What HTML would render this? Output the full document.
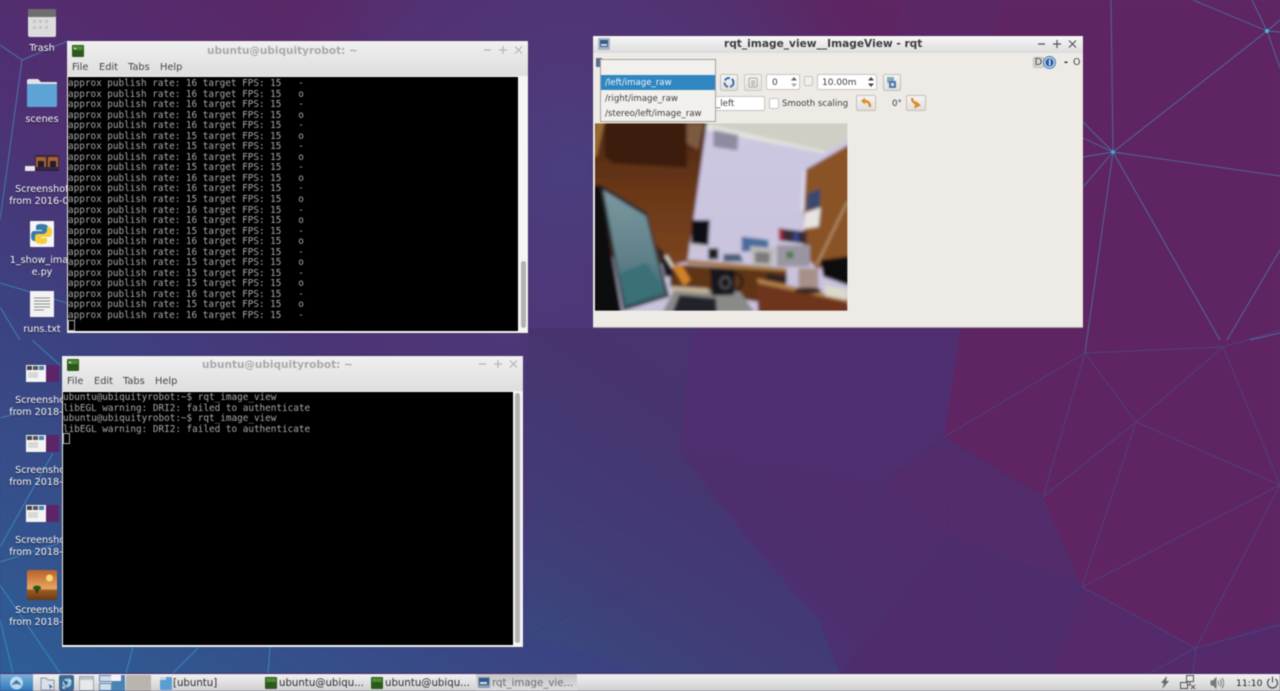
<!DOCTYPE html>
<html><head><meta charset="utf-8"><title>Desktop</title>
<style>
html,body{margin:0;padding:0;width:1280px;height:691px;overflow:hidden;background:#4a3a78}
*{box-sizing:border-box}
#root{position:relative;width:1280px;height:691px;overflow:hidden;filter:blur(.45px);font-family:"DejaVu Sans","Liberation Sans",sans-serif}
.abs,.lbl,.win,.t{position:absolute}
.lbl{width:84px;left:0;text-align:center;color:#fff;font-size:9.6px;line-height:12px;text-shadow:0 1px 1px rgba(0,0,0,.7);white-space:nowrap}
.win{background:#f2f0ed;box-shadow:0 0 1px rgba(0,0,0,.5)}
.tb{position:absolute;left:0;right:0;top:0;height:19px;background:linear-gradient(#f4f4f4,#dcdcdc)}
.ttl{position:absolute;top:3px;margin-top:1px;font-weight:bold;font-size:10.5px;line-height:13px;white-space:nowrap}
.mi{position:absolute;margin-top:1px;font-size:9.8px;line-height:12px;color:#444}
.term{position:absolute;background:#000;color:#a8a8a8;font:9.33px/10.55px "DejaVu Sans Mono",monospace;margin:0;white-space:pre;overflow:hidden}
.t{white-space:nowrap;font-size:8.6px;line-height:12px;color:#3c3c3c;margin-top:1px}
.btn{position:absolute;background:linear-gradient(#f6f5f3,#e2dfdb);border:1px solid #c4c0bb;border-radius:2px}
.inp{position:absolute;background:#fff;border:1px solid #c8c4bf;border-radius:2px}
.task{position:absolute;white-space:nowrap;font-size:10.2px;line-height:13px;color:#2f2f2f;top:677px}
</style></head><body><div id="root">

<svg class="abs" style="left:0;top:0" width="1280" height="691" viewBox="0 0 1280 691">
<defs>
<linearGradient id="bg" gradientUnits="userSpaceOnUse" x1="0" y1="691" x2="600" y2="-309">
<stop offset="0" stop-color="#2d5f97"/><stop offset=".3" stop-color="#3d4180"/><stop offset=".42" stop-color="#4d3274"/><stop offset=".65" stop-color="#5b2768"/><stop offset="1" stop-color="#5f2460"/>
</linearGradient>
<radialGradient id="mid" gradientUnits="userSpaceOnUse" cx="570" cy="170" r="310">
<stop offset="0" stop-color="#4a4080" stop-opacity=".95"/><stop offset=".7" stop-color="#4c3a7a" stop-opacity=".6"/><stop offset="1" stop-color="#4c3a7a" stop-opacity="0"/>
</radialGradient>
<linearGradient id="lg" gradientUnits="userSpaceOnUse" x1="525" y1="650" x2="700" y2="380">
<stop offset="0" stop-color="#374a80"/><stop offset=".3" stop-color="#403e78"/><stop offset=".8" stop-color="#47356f"/><stop offset="1" stop-color="#48346e"/>
</linearGradient>
<linearGradient id="rg" gradientUnits="userSpaceOnUse" x1="780" y1="660" x2="1040" y2="400">
<stop offset="0" stop-color="#4b3170"/><stop offset="1" stop-color="#562a6a"/>
</linearGradient>
</defs>
<rect width="1280" height="691" fill="url(#bg)"/>
<rect width="1280" height="691" fill="url(#mid)"/>
<polygon points="961,0 1280,0 1280,673 1196,648 1082,587 1043,497 944,437 961,328" fill="#5e2562"/>
<polygon points="1000,0 961,328 880,330 900,0" fill="#5b2a68" opacity=".6"/>
<polygon points="692,328 961,328 944,437 881,483 680,453" fill="#4f2f70"/>
<polygon points="528,328 692,328 680,453 525,413" fill="url(#lg)"/>
<polygon points="680,453 881,483 820,622 762,557" fill="url(#rg)"/>
<polygon points="881,483 944,437 1043,497 1082,587 949,537" fill="#522c6b"/>
<polygon points="881,483 949,537 840,673 820,622" fill="url(#rg)"/>
<polygon points="949,537 1082,587 1051,673 840,673" fill="#4f2d6d"/>
<polygon points="1082,587 1196,648 1280,620 1280,673 1051,673" fill="#552a6a"/>
<polygon points="525,413 680,453 762,557 531,512" fill="url(#lg)"/>
<polygon points="762,557 820,622 840,673 650,673 527,635 531,512" fill="url(#lg)"/>
<g fill="none" stroke="#2f3d70" stroke-width="1" opacity=".3">
<path d="M680,453L881,483L949,537L1082,587M881,483L944,437L1043,497M944,437L949,537M881,483L820,622L840,673M949,537L840,673M949,537L1019,673M1082,587L1051,673M531,512L762,557M527,635L692,560M531,512L640,460"/>
</g>
<g fill="none" stroke="#45a0c8" stroke-width=".9" opacity=".6">
<path d="M1113,152L1111,0M1113,152L1267,31M1113,152L1280,176M1113,152L1220,340M1113,152L1085,353M1113,152L1083,122M1113,152L1083,138M1113,152L1083,157M1113,152L1083,187"/>
<path d="M1267,31L1193,0M1267,31L1252,0M1267,31L1280,68M1267,31L1280,20M1267,31L1280,32M1227,340L1280,250M1250,340L1280,333"/>
</g>
<circle cx="1113" cy="152" r="2" fill="#3fa8c8"/><circle cx="1267" cy="31" r="2" fill="#3fc0e0"/>
<g fill="none" stroke="#3c6ea4" stroke-width=".9" opacity=".42">
<path d="M1085,353L1223,347L1280,330M1085,353L1136,422L1223,347M1085,353L1043,497M1085,353L944,437M1136,422L1043,497M1136,422L1082,587M1136,422L1280,485M1223,347L1280,485M1280,485L1082,587M1280,485L1196,648M1082,587L1196,648M1196,648L1280,625M1196,648L1193,673M1196,648L1150,673"/>
</g>
<g fill="none" stroke="#3fb0d8" stroke-width="1" opacity=".55">
<path d="M22,60L0,45M22,60L70,40M22,60L0,220M0,283L67,303M0,307L20,340M32,340L60,365M0,418L20,413M0,547L53,453M0,562L60,543M0,585L60,673M0,620L13,673M133,647L126,673M198,648L173,673M270,647L268,673"/>
</g>
<!-- trash -->
<rect x="28" y="9" width="28" height="28" rx="2" fill="#dcdcdc"/><rect x="28" y="9" width="28" height="8" rx="1" fill="#6e6e6e"/>
<g fill="#c4c4c4"><rect x="33" y="20" width="3" height="3"/><rect x="39" y="20" width="3" height="3"/><rect x="45" y="20" width="3" height="3"/><rect x="33" y="26" width="3" height="3"/><rect x="39" y="26" width="3" height="3"/><rect x="45" y="26" width="3" height="3"/></g>
<!-- folder -->
<path d="M27,81a2,2 0 0 1 2-2h9l3,3h15a1,1 0 0 1 1,1v22a2,2 0 0 1-2,2H29a2,2 0 0 1-2-2z" fill="#e4e4e4"/><path d="M27,84h30v21a2,2 0 0 1-2,2H29a2,2 0 0 1-2-2z" fill="#5da3d6"/>
<!-- screenshot 2016 -->
<rect x="25" y="166" width="10" height="5" fill="#e8e8e8"/><rect x="35" y="155" width="24" height="16" fill="#3a2a30"/><rect x="36" y="157" width="10" height="10" fill="#a8603a"/><rect x="48" y="157" width="10" height="10" fill="#a8603a"/><rect x="38" y="161" width="6" height="6" fill="#241c28"/><rect x="50" y="161" width="6" height="6" fill="#241c28"/><rect x="35" y="169" width="24" height="2" fill="#2a2050"/>
<!-- python -->
<rect x="30" y="221" width="24" height="26" rx="1" fill="#f5f5f5"/><path d="M41,224c-5,0-5,2-5,3v3h6v1h-8c-2,0-3,2-3,5s1,5,3,5h2v-3c0-2,2-4,4-4h5c2,0 3-1 3-3v-4c0-2-3-3-7-3z" fill="#3a79ad"/><path d="M42,244c5,0 5-2 5-3v-3h-6v-1h8c2,0 3-2 3-5s-1-5-3-5h-2v3c0,2-2,4-4,4h-5c-2,0-3,1-3,3v4c0,2 3,3 7,3z" fill="#f5cd3d"/>
<!-- text file -->
<rect x="30" y="291" width="24" height="26" fill="#f2f2f2"/><path d="M34,298h16M34,301h16M34,304h16M34,307h16M34,310h10" stroke="#8c8c8c" stroke-width="1"/>
<!-- screenshot thumbs -->
<g><rect x="26" y="365" width="20" height="17" fill="#f4f4f4"/><rect x="46" y="365" width="13" height="17" fill="#5b2568"/><rect x="27" y="366" width="5" height="4" fill="#444"/><rect x="33" y="366" width="5" height="4" fill="#555"/><rect x="39" y="366" width="5" height="4" fill="#4a7fb0"/><rect x="28" y="372" width="10" height="6" fill="#d8d8d8"/></g>
<g><rect x="26" y="435" width="20" height="17" fill="#f4f4f4"/><rect x="46" y="435" width="13" height="17" fill="#5b2568"/><rect x="27" y="436" width="5" height="4" fill="#444"/><rect x="33" y="436" width="5" height="4" fill="#555"/><rect x="39" y="436" width="5" height="4" fill="#4a7fb0"/><rect x="28" y="442" width="10" height="6" fill="#d8d8d8"/></g>
<g><rect x="26" y="505" width="20" height="17" fill="#f4f4f4"/><rect x="46" y="505" width="13" height="17" fill="#5b2568"/><rect x="27" y="506" width="5" height="4" fill="#444"/><rect x="33" y="506" width="5" height="4" fill="#555"/><rect x="39" y="506" width="5" height="4" fill="#4a7fb0"/><rect x="28" y="512" width="10" height="6" fill="#d8d8d8"/></g>
<!-- image icon -->
<defs><linearGradient id="ig" x1="0" y1="0" x2="0" y2="1"><stop offset="0" stop-color="#b8602c"/><stop offset=".62" stop-color="#e8a860"/><stop offset=".68" stop-color="#9a5a22"/><stop offset="1" stop-color="#6a3a14"/></linearGradient></defs>
<rect x="27" y="570" width="30" height="30" rx="2" fill="url(#ig)"/><circle cx="49.500" cy="578" r="3.500" fill="#f8d878"/><ellipse cx="37" cy="588" rx="4" ry="2.500" fill="#2a5a20"/><rect x="36" y="589" width="2" height="4" fill="#3a2a10"/>
</svg>

<div class="lbl" style="top:43px">Trash</div>
<div class="lbl" style="top:114px">scenes</div>
<div class="lbl" style="top:184px">Screenshot<br>from 2016-01</div>
<div class="lbl" style="top:255px">1_show_imag<br>e.py</div>
<div class="lbl" style="top:324px">runs.txt</div>
<div class="lbl" style="top:395px">Screenshot<br>from 2018-11</div>
<div class="lbl" style="top:465px">Screenshot<br>from 2018-11</div>
<div class="lbl" style="top:535px">Screenshot<br>from 2018-11</div>
<div class="lbl" style="top:605px">Screenshot<br>from 2018-11</div>

<!-- Terminal 1 -->
<div class="win" style="left:67px;top:41px;width:461px;height:292px;background:#f6f5f3">
<div class="tb" style="height:35px;background:linear-gradient(#f0f0f0,#dedede)"></div>
<svg class="abs" style="left:5px;top:4px" width="12" height="12"><rect width="12" height="12" rx="1" fill="#2c5a1c"/><rect x="1" y="1" width="10" height="4" fill="#4f8a34"/><path d="M2,3l2,1" stroke="#fff"/></svg>
<div class="ttl" style="left:140px;color:#a9a9a9">ubuntu@ubiquityrobot: ~</div>
<svg class="abs" style="left:416px;top:3px" width="42" height="12" fill="none" stroke="#b4b4b4" stroke-width="1.2"><path d="M1,6h7M16,6h8M20,2v8M32,2.500l7,7M39,2.500l-7,7"/></svg>
<div class="mi" style="left:5px;top:20px">File</div><div class="mi" style="left:32px;top:20px">Edit</div><div class="mi" style="left:61px;top:20px">Tabs</div><div class="mi" style="left:93px;top:20px">Help</div>
<pre class="term" style="left:1px;top:36px;width:450px;height:254px;padding:0"><div style="height:2px"></div>approx publish rate: 16 target FPS: 15   -
approx publish rate: 16 target FPS: 15   o
approx publish rate: 16 target FPS: 15   -
approx publish rate: 16 target FPS: 15   o
approx publish rate: 16 target FPS: 15   -
approx publish rate: 15 target FPS: 15   o
approx publish rate: 15 target FPS: 15   -
approx publish rate: 16 target FPS: 15   o
approx publish rate: 15 target FPS: 15   -
approx publish rate: 16 target FPS: 15   o
approx publish rate: 16 target FPS: 15   -
approx publish rate: 15 target FPS: 15   o
approx publish rate: 16 target FPS: 15   -
approx publish rate: 16 target FPS: 15   o
approx publish rate: 15 target FPS: 15   -
approx publish rate: 16 target FPS: 15   o
approx publish rate: 16 target FPS: 15   -
approx publish rate: 15 target FPS: 15   o
approx publish rate: 15 target FPS: 15   -
approx publish rate: 15 target FPS: 15   o
approx publish rate: 16 target FPS: 15   -
approx publish rate: 15 target FPS: 15   o
approx publish rate: 16 target FPS: 15   -</pre>
<div class="abs" style="left:1px;top:279px;width:7px;height:11px;border:1px solid #a8a8a8"></div>
<div class="abs" style="left:454px;top:220px;width:5px;height:67px;background:#b2b2b2;border-radius:3px"></div>
</div>

<!-- Terminal 2 -->
<div class="win" style="left:62px;top:356px;width:461px;height:291px;background:#f6f5f3">
<div class="tb" style="height:35px;background:linear-gradient(#f0f0f0,#dedede)"></div>
<svg class="abs" style="left:5px;top:3px" width="12" height="12"><rect width="12" height="12" rx="1" fill="#2c5a1c"/><rect x="1" y="1" width="10" height="4" fill="#4f8a34"/><path d="M2,3l2,1" stroke="#fff"/></svg>
<div class="ttl" style="left:140px;top:2px;color:#a9a9a9">ubuntu@ubiquityrobot: ~</div>
<svg class="abs" style="left:416px;top:2px" width="42" height="12" fill="none" stroke="#b4b4b4" stroke-width="1.2"><path d="M1,6h7M16,6h8M20,2v8M32,2.500l7,7M39,2.500l-7,7"/></svg>
<div class="mi" style="left:5px;top:19px">File</div><div class="mi" style="left:32px;top:19px">Edit</div><div class="mi" style="left:61px;top:19px">Tabs</div><div class="mi" style="left:93px;top:19px">Help</div>
<pre class="term" style="left:1px;top:36px;width:450px;height:253px;padding:0"><div style="height:1px"></div>ubuntu@ubiquityrobot:~$ rqt_image_view
libEGL warning: DRI2: failed to authenticate
ubuntu@ubiquityrobot:~$ rqt_image_view
libEGL warning: DRI2: failed to authenticate</pre>
<div class="abs" style="left:1px;top:77px;width:7px;height:11px;border:1px solid #a8a8a8"></div>
<div class="abs" style="left:453px;top:37px;width:5px;height:250px;background:#b2b2b2;border-radius:3px"></div>
</div>

<!-- rqt window -->
<div class="win" style="left:593px;top:36px;width:490px;height:292px;background:#eeebe7;border-bottom:1px solid #a8a4a8">
<div class="tb" style="height:17px;background:linear-gradient(#f8f8f8,#dcdcdc)"></div>
<svg class="abs" style="left:5px;top:2px" width="12" height="12"><rect width="12" height="12" rx="1" fill="#a8b4c4"/><rect x="2" y="2" width="8" height="7" fill="#3a5a8a"/><rect x="3" y="6" width="6" height="2" fill="#d0d8e4"/></svg>
<div class="ttl" style="left:131px;top:1px;font-size:10.6px;color:#3c3c3c">rqt_image_view__ImageView - rqt</div>
<svg class="abs" style="left:444px;top:2px" width="42" height="12" fill="none" stroke="#555" stroke-width="1.2"><path d="M1,6h7M16,6h8M20,2v8M32,2.500l7,7M39,2.500l-7,7"/></svg>

<div class="abs" style="left:3px;top:22px;width:6px;height:9px;background:#5a6e90"></div>

<div class="abs" style="left:440px;top:21px;width:11px;height:11px;background:#dcd9d4;border:1px solid #bdb9b4;border-radius:2px;font-size:10px;line-height:9px;text-align:center;color:#444">D</div>
<svg class="abs" style="left:450px;top:20px" width="13" height="13"><circle cx="6.500" cy="6.500" r="6" fill="#c0d4ec" stroke="#4a7ab8"/><circle cx="6.500" cy="6.500" r="4" fill="#2c5a9c"/><rect x="6" y="3.500" width="1.500" height="6" fill="#dce8f4"/></svg>
<div class="t" style="left:471px;top:20px;font-weight:bold;color:#222;font-size:9.5px">-</div>
<div class="t" style="left:480px;top:20px;color:#444;font-size:9.5px">O</div>

<div class="btn" style="left:127px;top:38px;width:18px;height:17px"></div>
<svg class="abs" style="left:130px;top:40px" width="12" height="13"><circle cx="6" cy="6.500" r="4.500" fill="none" stroke="#3a6fb0" stroke-width="2" stroke-dasharray="6 2"/></svg>
<div class="btn" style="left:151px;top:38px;width:18px;height:17px;opacity:.8"></div>
<svg class="abs" style="left:155px;top:41px" width="10" height="11" fill="none" stroke="#aaa"><rect x="1" y="1" width="8" height="9" rx="1"/><path d="M4,4h2v4h-2z"/></svg>
<div class="inp" style="left:173px;top:38px;width:34px;height:16px"></div>
<div class="t" style="left:179px;top:40px;font-size:9px">0</div>
<svg class="abs" style="left:196px;top:39px" width="10" height="14" fill="#666"><path d="M5,2l3,3.500H2z"/><path d="M5,12L2,8.500h6z" fill="#aaa"/></svg>
<div class="inp" style="left:211px;top:40px;width:9px;height:10px;background:#f2f0ed"></div>
<div class="inp" style="left:224px;top:38px;width:60px;height:16px"></div>
<div class="t" style="left:229px;top:40px;font-size:9px">10.00m</div>
<svg class="abs" style="left:273px;top:39px" width="10" height="14" fill="#444"><path d="M5,2l3,3.500H2z"/><path d="M5,12L2,8.500h6z"/></svg>
<div class="btn" style="left:290px;top:38px;width:18px;height:17px"></div>
<svg class="abs" style="left:293px;top:40px" width="12" height="13"><rect x="1" y="1" width="7" height="6" fill="#8ab"/><path d="M3,5h7v7H3z" fill="#4a78a8"/><path d="M5,7h3v3H5z" fill="#dde"/></svg>

<div class="inp" style="left:120px;top:60px;width:52px;height:15px"></div>
<div class="t" style="left:123px;top:61px">_left</div>
<div class="inp" style="left:176px;top:62px;width:10px;height:11px"></div>
<div class="t" style="left:189px;top:61px">Smooth scaling</div>
<div class="btn" style="left:263px;top:59px;width:20px;height:16px"></div>
<svg class="abs" style="left:267px;top:61px" width="12" height="12" fill="none" stroke="#e08a2a" stroke-width="2.400"><path d="M10,10C10,6 8,4 4,4"/><path d="M5,0.500L1,4l4,3.500z" fill="#e08a2a" stroke="none"/></svg>
<div class="t" style="left:299px;top:61px">0°</div>
<div class="btn" style="left:313px;top:59px;width:20px;height:16px"></div>
<svg class="abs" style="left:317px;top:61px" width="12" height="12" fill="none" stroke="#e08a2a" stroke-width="2.400"><path d="M2,1C2,4 4,6 7,7"/><path d="M4,11.500L11,8.500 6,4z" fill="#e08a2a" stroke="none"/></svg>

<!-- camera image -->
<svg class="abs" style="left:-3px;top:84px" width="265" height="200" viewBox="0 0 795 600">
<defs><clipPath id="c"><rect x="15" y="10" width="757" height="562"/></clipPath><filter id="b" x="-5%" y="-5%" width="110%" height="110%"><feGaussianBlur stdDeviation="4.500"/></filter>
<linearGradient id="lap" x1="0" y1="0" x2="0" y2="1"><stop offset="0" stop-color="#7c98a0"/><stop offset=".6" stop-color="#5f8088"/><stop offset="1" stop-color="#2f6068"/></linearGradient>
<linearGradient id="wood" x1="0" y1="0" x2="0" y2="1"><stop offset="0" stop-color="#4a2410"/><stop offset=".5" stop-color="#6a3818"/><stop offset="1" stop-color="#7a4420"/></linearGradient>
<linearGradient id="wall" x1="0" y1="0" x2="0" y2="1"><stop offset="0" stop-color="#cdc8e2"/><stop offset="1" stop-color="#c8c2dc"/></linearGradient></defs>
<g clip-path="url(#c)"><g filter="url(#b)">
<rect x="0" y="0" width="800" height="600" fill="url(#wall)"/>
<polygon points="340,0 800,0 772,65 705,95 350,20" fill="#cfcfc6"/>
<polygon points="350,12 710,95 705,100 345,30" fill="#e4e4de"/>
<polygon points="370,30 445,45 442,92 370,80" fill="#8e8ba0"/>
<polygon points="0,0 352,0 312,290 292,425 240,435 0,400" fill="url(#wood)"/>
<polygon points="15,0 45,0 20,110 10,110" fill="#9a6a34"/>
<polygon points="45,0 290,0 290,142 70,130 45,110" fill="#3a1a0c"/>
<polygon points="290,10 342,10 325,90 290,70" fill="#7a5a40"/>
<polygon points="645,150 800,60 800,425 680,445 640,400" fill="#8a5226"/>
<polygon points="640,150 648,150 642,270 632,270" fill="#e2deea"/>
<polygon points="652,222 692,205 689,265 650,272" fill="#3a4870"/>
<polygon points="645,278 692,262 686,320 640,327" fill="#e8e4e0"/>
<polygon points="305,300 360,300 355,376 304,370" fill="#101012"/>
<polygon points="298,370 340,375 340,392 298,390" fill="#c8c4cc"/>
<polygon points="455,350 535,360 535,390 455,395" fill="#486a9c"/>
<polygon points="480,378 555,385 550,442 488,436" fill="#bcbabc"/>
<polygon points="495,395 540,398 538,430 495,428" fill="#7c7a7a"/>
<polygon points="565,325 650,335 650,372 570,362" fill="#3a2a36"/>
<rect x="566" y="325" width="12" height="36" fill="#a82a3a"/><rect x="612" y="335" width="12" height="32" fill="#2a4a9a"/>
<rect x="560" y="375" width="100" height="65" fill="#9a96a0"/>
<rect x="590" y="395" width="20" height="20" fill="#4a7a4a"/>
<polygon points="355,385 385,385 385,418 355,418" fill="#1c1c1e"/>
<polygon points="400,402 450,402 460,425 400,425" fill="#4a6078"/>
<polygon points="290,418 590,445 590,458 290,432" fill="#a87c44"/>
<polygon points="240,432 590,455 590,490 500,545 240,500" fill="#5e3418"/>
<polygon points="0,200 30,195 100,600 0,600" fill="#0e0e10"/>
<polygon points="205,600 255,505 450,515 510,600" fill="#8a8a88"/>
<polygon points="238,600 268,525 378,535 382,600" fill="#24242a"/>
<polygon points="28,192 170,278 238,530 100,572" fill="#22282c"/>
<polygon points="40,210 168,288 228,525 104,562" fill="url(#lap)"/>
<polygon points="90,460 170,428 222,510 110,555" fill="#3a7078"/>
<polygon points="200,375 240,420 250,470 225,470" fill="#17171a"/>
<polygon points="245,438 275,434 302,480 282,498" fill="#d0822c"/>
<polygon points="222,406 232,406 252,440 246,444" fill="#e8e4d8"/>
<polygon points="238,498 355,505 355,520 245,512" fill="#c4b498"/>
<polygon points="360,445 435,450 432,525 365,527" fill="#18181c"/>
<path d="M435,460a22,25 0 0 1 0,50" fill="none" stroke="#18181c" stroke-width="7"/>
<ellipse cx="406" cy="488" rx="15" ry="17" fill="none" stroke="#8a8a94" stroke-width="2"/>
<polygon points="500,475 772,545 800,600 505,600" fill="#6e341c"/>
<polygon points="500,475 800,540 800,552 505,490" fill="#b08048"/>
<polygon points="690,420 800,405 800,505 700,470" fill="#0e0e10"/>
<polygon points="625,445 685,445 685,508 625,508" fill="#a89088"/>
<ellipse cx="654" cy="512" rx="40" ry="10" fill="#3a2a20"/>
<polygon points="705,495 772,508 772,540 705,527" fill="#dcd8cc"/>
<path d="M680,435L772,245" stroke="#d8c098" stroke-width="3" fill="none"/>
<polygon points="530,460 590,470 590,488 530,480" fill="#2a2224"/>
</g></g></svg>
</div>

<!-- dropdown -->
<div class="abs" style="left:600px;top:59px;width:116px;height:63px;background:#f2f0ed;border:1px solid #a4a09c"></div>
<div class="abs" style="left:601px;top:75px;width:114px;height:15px;background:#2f86c0"></div>
<div class="t" style="left:605px;top:76px;color:#f2f6fa">/left/image_raw</div>
<div class="t" style="left:605px;top:92px">/right/image_raw</div>
<div class="t" style="left:605px;top:107px">/stereo/left/image_raw</div>

<!-- panel -->
<div class="abs" style="left:0;top:673px;width:1280px;height:18px;background:linear-gradient(#f0f0f0,#d0d0d0);border-top:1px solid #4a2a68"></div>
<div class="abs" style="left:0;top:674px;width:33px;height:17px;background:linear-gradient(#7cb0dc,#2f78b8)"></div>
<svg class="abs" style="left:8px;top:675px" width="17" height="16" fill="none"><circle cx="8.500" cy="8" r="6.500" fill="#d8e8f4" opacity=".8"/><path d="M3,11c2-3 3.500-5 5.500-6c2,1 3.500,3 5.500,6c-2-1.500-3.500-2-5.500-2c-2,0-3.500,.500-5.500,2z" fill="#3a78b0"/></svg>
<svg class="abs" style="left:40px;top:675px" width="16" height="16"><path d="M1,3h5l2,2h6v10H1z" fill="#d8e0e8" stroke="#8a98a8"/><path d="M9,9l4,3-2,.5-1,2z" fill="#4a6a8a"/></svg>
<svg class="abs" style="left:59px;top:675px" width="15" height="16"><rect width="15" height="16" rx="2" fill="#3a6a94"/><circle cx="8" cy="8" r="4.500" fill="#9ac4dc"/><path d="M4,5l5,2-2,4z" fill="#2a5a80"/><path d="M10,3l3,3-3,1zM3,11l4,2-3,1z" fill="#c8dcec"/></svg>
<svg class="abs" style="left:79px;top:675px" width="15" height="16"><rect x=".5" y="1.500" width="14" height="14" fill="#e8e8e8" stroke="#9aa4ae"/><rect x="1" y="2" width="13" height="3" fill="#b8c4ce"/></svg>
<div class="abs" style="left:99px;top:675px;width:13px;height:7px;background:#cfdce8;border:1px solid #5a88b0"></div>
<div class="abs" style="left:99px;top:683px;width:13px;height:8px;background:#cfdce8;border:1px solid #5a88b0"></div>
<div class="abs" style="left:112px;top:675px;width:13px;height:16px;background:#4a84b4"></div>
<div class="abs" style="left:111px;top:675px;width:10px;height:6px;background:#f2f4f6"></div>
<div class="abs" style="left:126px;top:675px;width:25px;height:16px;background:#b8b4ae"></div>
<svg class="abs" style="left:160px;top:676px" width="12" height="14"><rect y="1" width="12" height="13" rx="1" fill="#5a9fd4"/><rect x="0" y="1" width="6" height="3" fill="#c8d4dc"/></svg>
<div class="task" style="left:173px">[ubuntu]</div>
<svg class="abs" style="left:265px;top:677px" width="12" height="12"><rect width="12" height="12" rx="1" fill="#2c5a1c"/><rect x="1" y="1" width="10" height="4" fill="#4f8a34"/></svg>
<div class="task" style="left:279px">ubuntu@ubiqu...</div>
<svg class="abs" style="left:371px;top:677px" width="12" height="12"><rect width="12" height="12" rx="1" fill="#2c5a1c"/><rect x="1" y="1" width="10" height="4" fill="#4f8a34"/></svg>
<div class="task" style="left:385px">ubuntu@ubiqu...</div>
<div class="abs" style="left:476px;top:674px;width:101px;height:17px;background:linear-gradient(#c8c8c8,#dcdcdc)"></div>
<svg class="abs" style="left:478px;top:677px" width="12" height="11"><rect width="12" height="11" fill="#8a9ab0"/><rect x="1" y="1" width="10" height="7" fill="#34588c"/><rect x="2" y="5" width="7" height="2" fill="#d8e0e8"/></svg>
<div class="task" style="left:492px;color:#6e6e6e">rqt_image_vie...</div>

<svg class="abs" style="left:1160px;top:676px" width="10" height="13" fill="#666"><path d="M7,0L1,7h3L2,13l7-8H6z"/></svg>
<svg class="abs" style="left:1180px;top:675px" width="16" height="15" fill="none" stroke="#555"><rect x="6.500" y=".5" width="7" height="6"/><rect x=".5" y="7.500" width="7" height="6"/><path d="M10,7v3M8,10h2M11,10l4,4M15,10l-4,4"/></svg>
<svg class="abs" style="left:1210px;top:677px" width="14" height="12" fill="none" stroke="#777"><path d="M1,4h2l3-3v10L3,8H1z" fill="#777"/><path d="M8,4a3,3 0 0 1 0,4M10,2.500a5,5 0 0 1 0,7M12,1a8,8 0 0 1 0,10"/></svg>
<div class="task" style="left:1236px;font-size:9.2px;color:#222">11:10</div>
<svg class="abs" style="left:1266px;top:676px" width="13" height="13" fill="none" stroke="#444" stroke-width="1.100"><path d="M3.500,3a5,5 0 1 0 6,0M6.500,.5v6"/></svg>
</div></body></html>
